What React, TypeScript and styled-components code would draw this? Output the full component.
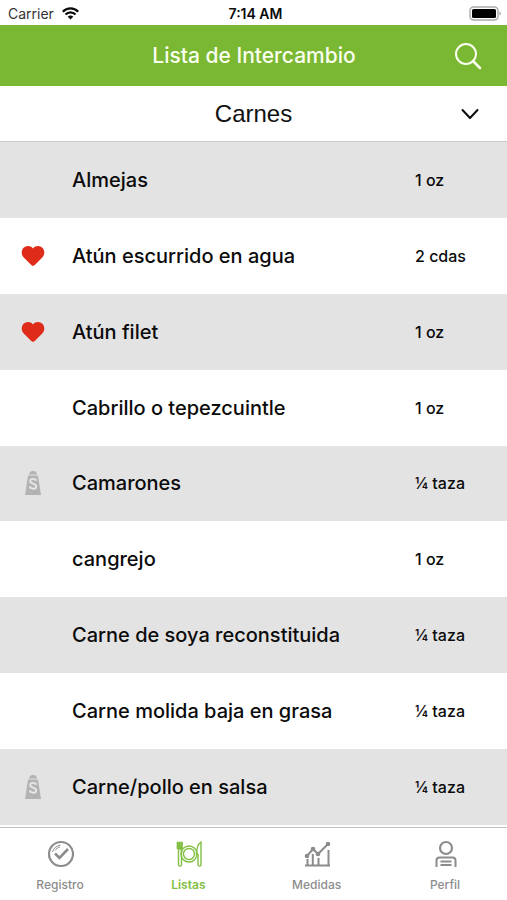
import React from "react";
import styled, { createGlobalStyle } from "styled-components";

const GlobalStyle = createGlobalStyle`
  *, *::before, *::after { box-sizing: border-box; }
  body {
    margin: 0;
    background: #fff;
    color: #0b0b0b;
    font-family: Inter, "Liberation Sans", sans-serif;
  }
`;

const Screen = styled.div`
  display: flex;
  flex-direction: column;
  min-height: 100vh;
`;

const StatusBar = styled.div`
  display: grid;
  grid-template-columns: 1fr auto 1fr;
  align-items: center;
  height: 25px;
  padding: 2px 4px 0 8px;
  font-size: 14px;
  line-height: 20px;
`;

const Carrier = styled.div`
  display: flex;
  align-items: center;
  gap: 8px;
  color: #333;
`;

const Clock = styled.time`
  font-weight: 600;
`;

const Battery = styled.svg`
  justify-self: end;
`;

const Header = styled.header`
  display: grid;
  grid-template-columns: 60px 1fr 60px;
  align-items: center;
  height: 61px;
  padding: 0 9px 0 10px;
  background: #7ab833;
  color: #fafff0;
`;

const Title = styled.h1`
  grid-column: 2;
  margin: 0;
  font-size: 21px;
  line-height: 24px;
  font-weight: 500;
  text-align: center;
`;

const SearchButton = styled.button`
  display: flex;
  justify-content: center;
  padding: 8px 0;
  border: 0;
  background: none;
  color: inherit;
  cursor: pointer;
`;

const Picker = styled.label`
  display: grid;
  align-items: center;
  height: 56px;
  border-bottom: 1px solid #c9c9c9;
`;

const PickerSelect = styled.select`
  grid-area: 1 / 1;
  width: 100%;
  height: 100%;
  padding: 0;
  border: 0;
  appearance: none;
  background: none;
  color: #111;
  font-family: "Liberation Sans", sans-serif;
  font-size: 24px;
  text-align: center;
  text-align-last: center;
`;

const PickerArrow = styled.svg`
  grid-area: 1 / 1;
  justify-self: end;
  margin-right: 28px;
  pointer-events: none;
`;

const FoodList = styled.ul`
  display: grid;
  grid-auto-rows: minmax(56px, 1fr);
  flex: 1;
  margin: 0 0 2px;
  padding: 0;
  list-style: none;
`;

const FoodRow = styled.li`
  display: grid;
  grid-template-columns: 66px 1fr 92px;
  align-items: center;
  &:nth-child(odd) { background: #e3e3e3; }
`;

const Marker = styled.span`
  display: flex;
  justify-content: center;
`;

const FoodName = styled.span`
  padding-left: 6px;
  font-size: 20px;
  line-height: 24px;
  font-weight: 500;
`;

const Portion = styled.span`
  font-size: 16px;
  line-height: 20px;
  font-weight: 500;
  white-space: nowrap;
`;

const TabBar = styled.nav`
  display: flex;
  justify-content: space-between;
  height: 73px;
  padding-right: 2px;
  border-top: 1px solid #c4c4c4;
  background: #fff;
`;

const Tab = styled.a<{ $active?: boolean }>`
  display: flex;
  flex-direction: column;
  align-items: center;
  gap: 9px;
  width: 120px;
  padding-top: 12px;
  color: ${(p) => (p.$active ? "#82bf43" : "#8c8c8c")};
  font-size: 12px;
  line-height: 16px;
  font-weight: ${(p) => (p.$active ? 600 : 500)};
  text-decoration: none;
`;

const Heart = () => (
  <svg width="24" height="22" viewBox="0 0 24 22" role="img" aria-label="Saludable">
    <path d="M12 21c-.7 0-1.300-.5-2-1.200L2.500 12.200C.3 9.900.1 6.100 1.900 3.500 4.300.1 9.500.2 12 3.400 14.500.2 19.700.1 22.100 3.500c1.800 2.600 1.600 6.400-.6 8.700L14 19.800c-.7.700-1.300 1.200-2 1.200z" fill="#df2b1a" />
  </svg>
);

const Salt = () => (
  <svg width="16" height="24" viewBox="0 0 16 24" role="img" aria-label="Alto en sodio">
    <path d="M4 3.500C4.500 1 5.500 0 8 0s3.500 1 4 3.500z" fill="#b3b3b3" />
    <path d="M3 4.500h10L16 24H0z" fill="#b3b3b3" />
    <path d="M10.800 9.800C9.800 7.200 5.200 7.200 5.200 10.200c0 3 6 2 6 5.200 0 3-5 3.200-6.200.2" fill="none" stroke="#e6e6e6" strokeWidth="1.800" />
    <path d="M11 7.500v2.500M4.800 15v2.700" stroke="#e6e6e6" />
  </svg>
);

const iconProps = { width: 28, height: 28, viewBox: "0 0 28 28", fill: "none", stroke: "currentColor", "aria-hidden": true } as const;

const RegistroIcon = () => (
  <svg {...iconProps}>
    <circle cx="15" cy="14" r="12" strokeWidth="2.200" />
    <path d="m9 13.500 4.500 4.500 8.500-9" strokeWidth="2.600" />
    <path d="M6.500 12c1-3.800 3.800-6.200 8-6.800M9 10.500c1.300-2 3-3 5-3.500" strokeWidth="1" />
  </svg>
);

const ListasIcon = () => (
  <svg {...iconProps}>
    <circle cx="15" cy="14" r="8" strokeWidth="1.400" />
    <circle cx="15" cy="14" r="5.500" strokeWidth="1.400" />
    <path d="M3 2v6c0 1 .6 1.500 1.500 1.500H7c1 0 1.500-.5 1.500-1.500V2H7v3H6.300V2H5v3h-.5V2z" fill="currentColor" strokeWidth=".7" />
    <path d="M4.500 10v15c0 1.500 3 1.500 3 0V10M27 2c-3 2-4.500 6-4.500 12.500H24V25c0 1.500 3 1.500 3 0z" strokeWidth="1.400" />
  </svg>
);

const MedidasIcon = () => (
  <svg {...iconProps}>
    <path d="M2 25.500h25M4.500 25v-6M9.800 25V14M15.500 25v-7M25.500 25V10" strokeWidth="2" />
    <path d="m4 16 6-7 5 5 10-10" strokeWidth="2" />
    <g fill="currentColor" stroke="none">
      <circle cx="4" cy="16" r="2.300" /><circle cx="10" cy="9" r="2.300" />
      <circle cx="15" cy="14" r="2.300" /><circle cx="25" cy="4" r="2.300" />
    </g>
  </svg>
);

const PerfilIcon = () => (
  <svg {...iconProps}>
    <circle cx="15" cy="8" r="6" strokeWidth="2.200" />
    <path d="M5.500 27v-6.500c0-2 1-3 3-3h13c2 0 3 1 3 3V27M9.500 21.500h11M9.500 25h11" strokeWidth="2" />
  </svg>
);

type Mark = "heart" | "salt";

const foods: { name: string; portion: string; mark?: Mark }[] = [
  { name: "Almejas", portion: "1 oz" },
  { name: "Atún escurrido en agua", portion: "2 cdas", mark: "heart" },
  { name: "Atún filet", portion: "1 oz", mark: "heart" },
  { name: "Cabrillo o tepezcuintle", portion: "1 oz" },
  { name: "Camarones", portion: "¼ taza", mark: "salt" },
  { name: "cangrejo", portion: "1 oz" },
  { name: "Carne de soya reconstituida", portion: "¼ taza" },
  { name: "Carne molida baja en grasa", portion: "¼ taza" },
  { name: "Carne/pollo en salsa", portion: "¼ taza", mark: "salt" },
];

const tabs = [
  { label: "Registro", Icon: RegistroIcon },
  { label: "Listas", Icon: ListasIcon },
  { label: "Medidas", Icon: MedidasIcon },
  { label: "Perfil", Icon: PerfilIcon },
];

export default function App() {
  return (
    <Screen>
      <GlobalStyle />
      <StatusBar>
        <Carrier>
          Carrier
          <svg width="17" height="13" viewBox="0 0 17 13" fill="none" stroke="#0b0b0b" strokeWidth="2.200" aria-hidden="true">
            <path d="M.8 4.700c4.300-4.500 11.100-4.500 15.400 0M3.500 7.500c2.800-2.900 7.200-2.900 10 0" />
            <path d="M8.500 12.500 5.700 9.700c1.600-1.600 4-1.600 5.600 0z" fill="#0b0b0b" stroke="none" />
          </svg>
        </Carrier>
        <Clock>7:14 AM</Clock>
        <Battery width="34" height="16" viewBox="0 0 34 16" role="img" aria-label="Batería">
          <rect x="1" y="1" width="28" height="13" rx="3.500" fill="#fff" stroke="#aaa" strokeWidth="1.400" />
          <rect x="3" y="3" width="24" height="9" rx="1.500" fill="#000" />
          <path d="M30.500 5.500c1.800.8 1.800 3.200 0 4z" fill="#999" />
        </Battery>
      </StatusBar>
      <Header>
        <Title>Lista de Intercambio</Title>
        <SearchButton type="button" aria-label="Buscar">
          <svg width="28" height="28" viewBox="0 0 28 28" fill="none" stroke="currentColor" strokeWidth="2" strokeLinecap="round" aria-hidden="true">
            <circle cx="12" cy="12" r="10" />
            <path d="m19 19 7 7" strokeWidth="2.500" />
          </svg>
        </SearchButton>
      </Header>
      <Picker>
        <PickerSelect aria-label="Categoría" defaultValue="Carnes">
          <option>Carnes</option>
        </PickerSelect>
        <PickerArrow width="18" height="12" viewBox="0 0 18 12" fill="none" stroke="#0b0b0b" strokeWidth="2" strokeLinecap="round" strokeLinejoin="round" aria-hidden="true">
          <path d="m1.500 2 7.500 8 7.500-8" />
        </PickerArrow>
      </Picker>
      <FoodList>
        {foods.map((food) => (
          <FoodRow key={food.name}>
            <Marker>
              {food.mark === "heart" && <Heart />}
              {food.mark === "salt" && <Salt />}
            </Marker>
            <FoodName>{food.name}</FoodName>
            <Portion>{food.portion}</Portion>
          </FoodRow>
        ))}
      </FoodList>
      <TabBar>
        {tabs.map(({ label, Icon }) => {
          const active = label === "Listas";
          return (
            <Tab key={label} href={`#${label.toLowerCase()}`} $active={active} aria-current={active ? "page" : undefined}>
              <Icon />
              {label}
            </Tab>
          );
        })}
      </TabBar>
    </Screen>
  );
}
